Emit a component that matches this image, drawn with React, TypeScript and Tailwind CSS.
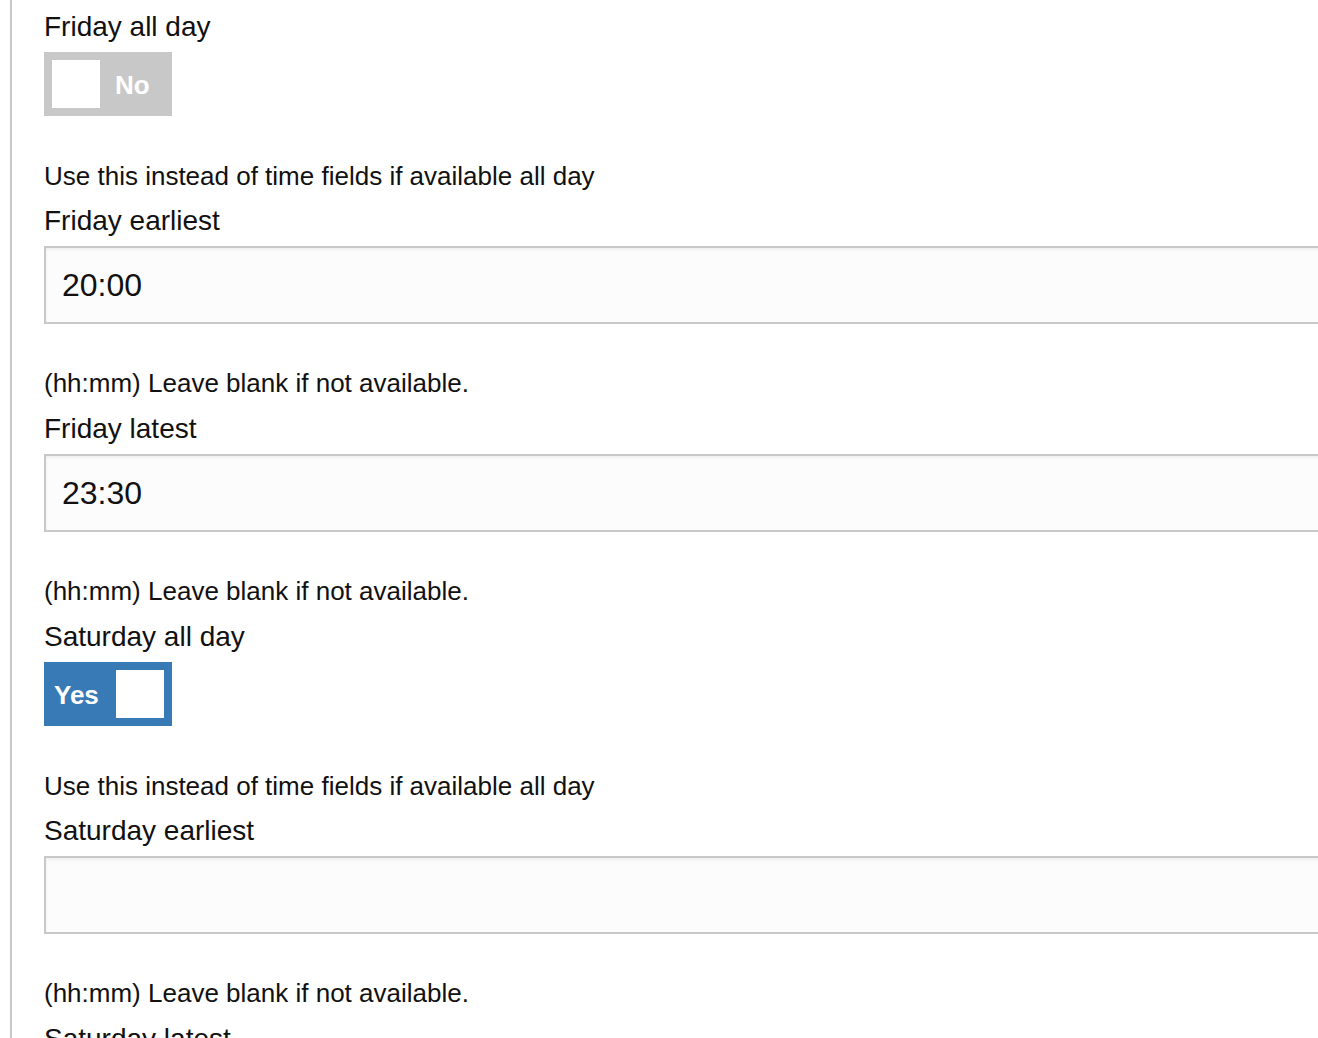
import React, { useState } from 'react';

const font = { fontFamily: '"Liberation Sans", Arial, Helvetica, sans-serif' };

interface ToggleProps {
  on: boolean;
  onChange: (v: boolean) => void;
}

const Toggle: React.FC<ToggleProps> = ({ on, onChange }) => (
  <button
    type="button"
    onClick={() => onChange(!on)}
    className={`flex items-center w-[128px] h-[64px] p-[8px] ${on ? 'bg-[#377ab6]' : 'bg-[#c8c8c8]'}`}
  >
    {on ? (
      <>
        <span className="flex-1 text-left pl-[2px] pt-[2px] text-white font-bold text-[26px] leading-none">Yes</span>
        <span className="w-[48px] h-[48px] bg-white" />
      </>
    ) : (
      <>
        <span className="w-[48px] h-[48px] bg-white" />
        <span className="flex-1 text-left pl-[15px] pt-[1px] text-white font-bold text-[26px] leading-none">No</span>
      </>
    )}
  </button>
);

const Help: React.FC<{ children: React.ReactNode; toggle?: boolean }> = ({ children, toggle }) => (
  <p className={`${toggle ? 'mt-[44px]' : 'mt-[43px]'} text-[26px] leading-[32px] text-[#111]`}>{children}</p>
);

const Label: React.FC<{ children: React.ReactNode }> = ({ children }) => (
  <label className="block text-[28px] leading-[36px] text-[#111] mb-[7px]">{children}</label>
);

const TimeField: React.FC<{ label: string; value: string }> = ({ label, value }) => {
  const [v, setV] = useState(value);
  return (
    <div className="mt-[11px] pb-[1px]">
      <Label>{label}</Label>
      <input
        value={v}
        onChange={(e) => setV(e.target.value)}
        className="block w-[1320px] h-[78px] mt-[1px] px-[16px] border-2 border-[#c8c8c8] bg-[#fcfcfc] shadow-[inset_0_2px_3px_rgba(0,0,0,0.06)] text-[32px] text-[#111] outline-none"
        style={font}
      />
      <Help>(hh:mm) Leave blank if not available.</Help>
    </div>
  );
};

const AllDayField: React.FC<{ label: string; initial: boolean; first?: boolean }> = ({ label, initial, first }) => {
  const [on, setOn] = useState(initial);
  return (
    <div className={first ? '' : 'mt-[11px]'}>
      <Label>{label}</Label>
      <Toggle on={on} onChange={setOn} />
      <Help toggle>Use this instead of time fields if available all day</Help>
    </div>
  );
};

export default function App() {
  return (
    <div className="h-screen overflow-hidden bg-white" style={font}>
      <div className="ml-[10px] border-l-2 border-[#c8c8c8] pl-[32px] pt-[9px] min-h-full">
        <AllDayField label="Friday all day" initial={false} first />
        <TimeField label="Friday earliest" value="20:00" />
        <TimeField label="Friday latest" value="23:30" />
        <AllDayField label="Saturday all day" initial={true} />
        <TimeField label="Saturday earliest" value="" />
        <TimeField label="Saturday latest" value="" />
      </div>
    </div>
  );
}
